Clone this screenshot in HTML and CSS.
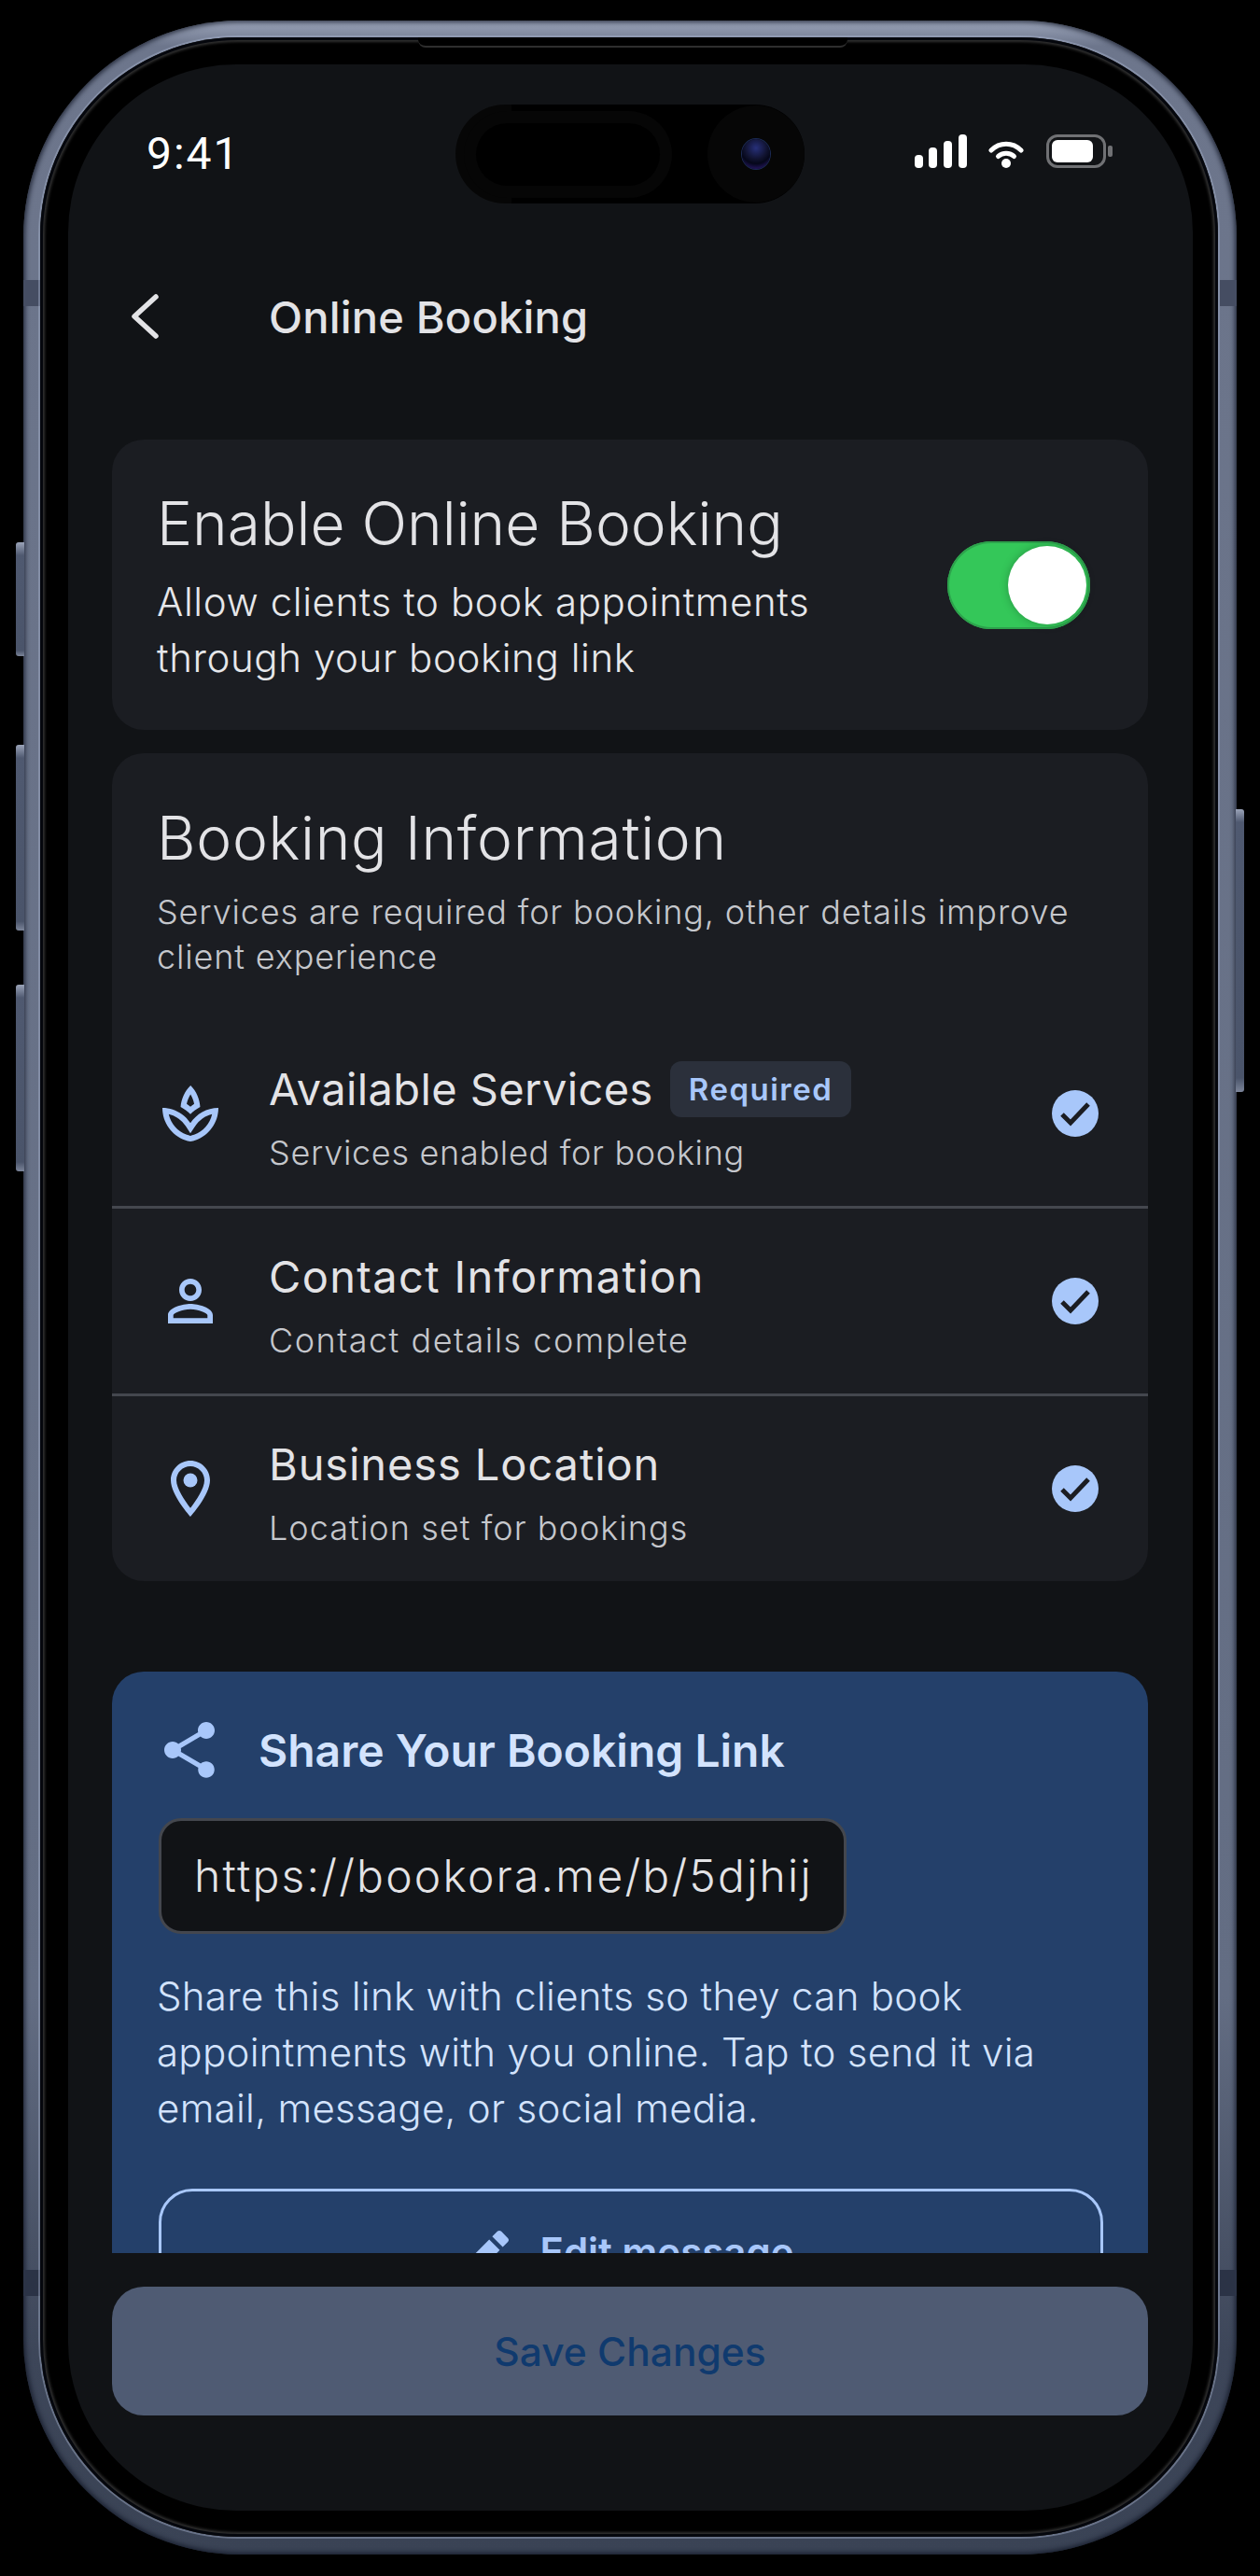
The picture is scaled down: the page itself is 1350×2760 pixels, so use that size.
FILE: index.html
```html
<!DOCTYPE html>
<html lang="en">
<head>
    <meta charset="UTF-8">
    <meta name="viewport" content="width=device-width, initial-scale=1.0">
    <title>Online Booking</title>
    <link rel="stylesheet" href="styles.css">
</head>
<body>

<div class="phone">
    <div class="side-btn side-btn-action"></div>
    <div class="side-btn side-btn-up"></div>
    <div class="side-btn side-btn-down"></div>
    <div class="side-btn side-btn-power"></div>
    <div class="antenna antenna-tl"></div>
    <div class="antenna antenna-tr"></div>
    <div class="antenna antenna-bl"></div>
    <div class="antenna antenna-br"></div>

    <div class="bezel">
        <div class="speaker-ear"></div>

        <div class="screen">
            <div class="island">
                <div class="island-pill"></div>
                <div class="island-cam"><div class="lens"></div></div>
            </div>

            <div class="statusbar">
                <span class="time">9:41</span>
                <div class="status-icons">
                    <svg class="ic-signal" viewBox="0 0 56 36">
                        <rect x="0" y="22" width="9" height="14" rx="4"/>
                        <rect x="15" y="14" width="9" height="22" rx="4"/>
                        <rect x="31" y="7" width="9" height="29" rx="4"/>
                        <rect x="47" y="0" width="9" height="36" rx="4"/>
                    </svg>
                    <svg class="ic-wifi" viewBox="0 0 38 30">
                        <path d="M3 11 C12 2 26 2 35 11" fill="none" stroke="#fff" stroke-width="5" stroke-linecap="round"/>
                        <path d="M10.500 17.500 C15 13 23 13 27.500 17.500" fill="none" stroke="#fff" stroke-width="5" stroke-linecap="round"/>
                        <circle cx="19" cy="25" r="5"/>
                    </svg>
                    <div class="battery">
                        <div class="battery-level"></div>
                    </div>
                    <div class="battery-nub"></div>
                </div>
            </div>

            <div class="appbar">
                <svg class="back" viewBox="0 0 72 72">
                    <polyline points="47,15 24,36 47,57" fill="none" stroke="#e3e3e6" stroke-width="5.500" stroke-linecap="round" stroke-linejoin="round"/>
                </svg>
                <h1>Online Booking</h1>
            </div>

            <div class="scroll">
                <section class="card card-enable">
                    <div class="enable-text">
                        <h2>Enable Online Booking</h2>
                        <p>Allow clients to book appointments through your booking link</p>
                    </div>
                    <div class="toggle"><div class="knob"></div></div>
                </section>

                <section class="card card-info">
                    <div class="info-head">
                        <h2>Booking Information</h2>
                        <p>Services are required for booking, other details improve client experience</p>
                    </div>

                    <div class="row">
                        <svg class="row-icon" viewBox="0 0 24 24"><path d="M15.49 9.630c-.18-2.790-1.310-5.510-3.430-7.630-2.140 2.140-3.320 4.860-3.550 7.630 1.280.68 2.460 1.560 3.490 2.630 1.030-1.060 2.210-1.940 3.490-2.630zm-3.440-4.440c.63 1.030 1.070 2.180 1.300 3.380-.47.3-.91.63-1.340.98-.42-.34-.87-.67-1.330-.97.25-1.200.71-2.350 1.370-3.390zM12 15.450c-.82-1.250-1.860-2.340-3.060-3.200-.13-.09-.27-.16-.4-.26.13.09.27.17.39.25C6.980 10.830 4.590 10 2 10c0 5.320 3.360 9.820 8.030 11.490.63.23 1.290.4 1.970.51.68-.12 1.330-.29 1.970-.51C18.640 19.820 22 15.320 22 10c-4.180 0-7.850 2.170-10 5.450zm1.320 4.150c-.44.15-.88.27-1.330.37-.44-.09-.87-.21-1.280-.36-3.290-1.180-5.700-3.990-6.450-7.350 1.100.26 2.150.71 3.120 1.330l-.02.01c.13.09.26.18.39.25l.07.04c.99.72 1.840 1.610 2.510 2.650L12 19.100l1.670-2.550c.69-1.050 1.550-1.950 2.530-2.660l.07-.05c.09-.05.18-.11.27-.17l-.01-.02c.98-.65 2.070-1.130 3.210-1.400-.75 3.370-3.150 6.180-6.420 7.350z"/></svg>
                        <div class="row-text">
                            <div class="row-title">Available Services <span class="badge">Required</span></div>
                            <div class="row-sub">Services enabled for booking</div>
                        </div>
                        <svg class="check" viewBox="0 0 50 50"><circle cx="25" cy="25" r="25"/><polyline points="11,26 20,35 39,15"/></svg>
                    </div>

                    <div class="row row-contact">
                        <svg class="row-icon" viewBox="0 0 24 24"><path d="M12 5.900c1.160 0 2.100.94 2.100 2.100s-.94 2.100-2.100 2.100S9.900 9.160 9.900 8s.94-2.100 2.100-2.100m0 9c2.970 0 6.100 1.460 6.100 2.100v1.100H5.900V17c0-.64 3.130-2.100 6.100-2.100M12 4C9.790 4 8 5.790 8 8s1.790 4 4 4 4-1.790 4-4-1.790-4-4-4zm0 9c-2.670 0-8 1.340-8 4v3h16v-3c0-2.660-5.330-4-8-4z"/></svg>
                        <div class="row-text">
                            <div class="row-title">Contact Information</div>
                            <div class="row-sub">Contact details complete</div>
                        </div>
                        <svg class="check" viewBox="0 0 50 50"><circle cx="25" cy="25" r="25"/><polyline points="11,26 20,35 39,15"/></svg>
                    </div>

                    <div class="row row-location">
                        <svg class="row-icon" viewBox="0 0 24 24"><path d="M12 2C8.130 2 5 5.130 5 9c0 5.250 7 13 7 13s7-7.750 7-13c0-3.870-3.130-7-7-7zM7 9c0-2.760 2.240-5 5-5s5 2.240 5 5c0 2.880-2.880 7.190-5 9.880C9.920 16.210 7 11.850 7 9z"/><circle cx="12" cy="9" r="2.500"/></svg>
                        <div class="row-text">
                            <div class="row-title">Business Location</div>
                            <div class="row-sub">Location set for bookings</div>
                        </div>
                        <svg class="check" viewBox="0 0 50 50"><circle cx="25" cy="25" r="25"/><polyline points="11,26 20,35 39,15"/></svg>
                    </div>
                </section>

                <section class="card card-share">
                    <div class="share-head">
                        <svg class="share-icon" viewBox="0 0 24 24"><path d="M18 16.080c-.76 0-1.440.3-1.960.77L8.910 12.700c.05-.23.09-.46.09-.7s-.04-.47-.09-.7l7.050-4.110c.54.5 1.250.81 2.040.81 1.660 0 3-1.340 3-3s-1.340-3-3-3-3 1.340-3 3c0 .24.04.47.09.7L8.040 9.810C7.500 9.310 6.790 9 6 9c-1.660 0-3 1.340-3 3s1.340 3 3 3c.79 0 1.500-.31 2.040-.81l7.120 4.160c-.05.21-.08.43-.08.65 0 1.610 1.310 2.920 2.920 2.920s2.920-1.310 2.920-2.920-1.310-2.920-2.920-2.920z"/></svg>
                        <h3>Share Your Booking Link</h3>
                    </div>
                    <div class="url-box">https://bookora.me/b/5djhij</div>
                    <p class="share-text">Share this link with clients so they can book appointments with you online. Tap to send it via email, message, or social media.</p>
                    <button class="edit-btn">
                        <svg class="edit-icon" viewBox="0 0 24 24"><path d="M3 17.250V21h3.750L17.810 9.940l-3.750-3.750L3 17.250zM20.710 7.040c.39-.39.39-1.020 0-1.410l-2.340-2.340c-.39-.39-1.020-.39-1.410 0l-1.830 1.830 3.750 3.750 1.830-1.830z"/></svg>
                        <span class="edit-label">Edit message</span>
                    </button>
                </section>
            </div>

            <div class="footer">
                <button class="save-btn">Save Changes</button>
            </div>
        </div>
    </div>
</div>

</body>
</html>
```

FILE: styles.css
```css
* {
    box-sizing: border-box;
}
body {
    margin: 0;
    background-color: #000;
    font-family: Inter, "Noto Sans", sans-serif;
}
h1, h2, h3, p {
    margin: 0;
}
button {
    font-family: inherit;
}

/* phone frame */
.phone {
    position: relative;
    width: 1300px;
    height: 2715px;
    margin: 22px 0 0 25px;
    padding: 18px 20px 19px 18px;
    border-radius: 232px;
    background: linear-gradient(180deg, #9aa3b8 0, #6d768c 1%, #636d83 78%, #3d4659 92%, #3a4355 100%);
    box-shadow: inset 0 0 5px 2px rgba(15, 20, 35, 0.75);
}
.bezel {
    position: relative;
    height: 100%;
    padding: 29px 27px 28px 30px;
    border-radius: 212px;
    background-color: #000;
    box-shadow: 0 0 0 2px rgba(170, 180, 208, 0.42), inset 0 0 0 3px #05070d, inset 0 0 3px 5px rgba(90, 90, 90, 0.55);
}
.speaker-ear {
    position: absolute;
    top: 0;
    left: 405px;
    width: 460px;
    height: 11px;
    border-bottom: 2px solid #2e2e2e;
    border-radius: 0 0 8px 8px;
    background-color: #000;
}
.side-btn {
    position: absolute;
    left: -8px;
    width: 9px;
    border-radius: 3px 0 0 3px;
    background: linear-gradient(180deg, #9aa3b8 0, #4f5970 14px, #4a546a 95%, #7c859a 100%);
}
.side-btn-action {
    top: 559px;
    height: 122px;
}
.side-btn-up {
    top: 776px;
    height: 199px;
}
.side-btn-down {
    top: 1033px;
    height: 200px;
}
.side-btn-power {
    left: auto;
    right: -8px;
    top: 845px;
    height: 303px;
    border-radius: 0 3px 3px 0;
}
.antenna {
    position: absolute;
    width: 18px;
    height: 28px;
    background-color: #454d62;
}
.antenna-tl {
    top: 278px;
    left: 0;
}
.antenna-tr {
    top: 278px;
    right: 0;
}
.antenna-bl {
    top: 2410px;
    left: 0;
    background-color: #2b3346;
}
.antenna-br {
    top: 2410px;
    right: 0;
    background-color: #2b3346;
}

.screen {
    position: relative;
    display: flex;
    flex-direction: column;
    height: 100%;
    overflow: hidden;
    border-radius: 180px;
    background-color: #111316;
    color: #e3e3e6;
}

/* dynamic island */
.island {
    position: absolute;
    top: 43px;
    left: 415px;
    display: flex;
    align-items: center;
    justify-content: space-between;
    width: 374px;
    height: 106px;
    padding: 0 0 0 22px;
    border-radius: 53px;
    background: linear-gradient(90deg, #060606 0, #060606 60px, #000 60px);
}
.island-pill {
    width: 197px;
    height: 67px;
    border-radius: 34px;
    background-color: #000;
    box-shadow: 0 0 0 13px #060606;
}
.island-cam {
    display: flex;
    align-items: center;
    justify-content: center;
    width: 104px;
    height: 104px;
    border-radius: 50%;
    background-color: #060606;
}
.lens {
    width: 30px;
    height: 32px;
    border-radius: 50%;
    background: radial-gradient(circle at 50% 30%, #27307a 0, #10122e 45%, #05071a 62%, #3a1f8c 100%);
    box-shadow: 0 0 0 1px #1b2a55;
}

/* status bar */
.statusbar {
    display: flex;
    align-items: flex-start;
    justify-content: space-between;
    height: 234px;
    padding: 72px 86px 0 84px;
}
.time {
    font-family: Roboto, sans-serif;
    font-size: 48px;
    font-weight: 400;
    line-height: 48px;
    letter-spacing: 2px;
    color: #fff;
}
.status-icons {
    display: flex;
    align-items: center;
    height: 36px;
    margin-top: 3px;
    fill: #fff;
}
.ic-signal {
    width: 56px;
    height: 36px;
    margin-right: 23px;
}
.ic-wifi {
    width: 38px;
    height: 30px;
    margin: 6px 24px 0 0;
}
.battery {
    width: 64px;
    height: 36px;
    padding: 3px;
    border: 3px solid #707174;
    border-radius: 12px;
}
.battery-level {
    width: 44px;
    height: 100%;
    border-radius: 6px;
    background-color: #fff;
}
.battery-nub {
    width: 5px;
    height: 12px;
    margin-left: 2px;
    border-radius: 2px;
    background-color: #707174;
}

/* app bar */
.appbar {
    display: flex;
    align-items: center;
    height: 72px;
    padding-left: 47px;
}
.back {
    width: 72px;
    height: 72px;
    margin-right: 96px;
}
.appbar h1 {
    font-size: 47px;
    font-weight: 450;
    letter-spacing: 0.200px;
}

.scroll {
    flex: 1;
    min-height: 0;
    margin-top: 96px;
    padding: 0 48px 0 47px;
    overflow: hidden;
}
.card {
    border-radius: 34px;
    background-color: #1b1d22;
}

/* enable card */
.card-enable {
    display: flex;
    align-items: center;
    justify-content: space-between;
    padding: 48px 62px 47px 48px;
}
.enable-text {
    width: 760px;
}
.card h2 {
    font-size: 64px;
    font-weight: 300;
    line-height: 84px;
}
.enable-text p {
    margin-top: 12px;
    font-size: 42px;
    font-weight: 300;
    line-height: 60px;
    letter-spacing: 0.600px;
    color: #e6e7ea;
}
.toggle {
    display: flex;
    align-items: center;
    justify-content: flex-end;
    width: 153px;
    height: 94px;
    padding-right: 4px;
    border-radius: 47px;
    background-color: #34c759;
    box-shadow: inset 0 0 0 2px #2da24c;
}
.knob {
    width: 84px;
    height: 84px;
    border-radius: 50%;
    background-color: #fff;
    box-shadow: 0 0 10px rgba(0, 0, 0, 0.25);
}

/* booking information */
.card-info {
    margin-top: 25px;
    padding-top: 49px;
}
.info-head {
    padding: 0 48px 45px;
}
.info-head h2 {
    letter-spacing: 0.700px;
}
.info-head p {
    margin-top: 13px;
    font-size: 36px;
    font-weight: 300;
    line-height: 48px;
    letter-spacing: 0.860px;
    color: #c5c7cc;
}
.row {
    display: flex;
    align-items: center;
    height: 198px;
    padding: 0 53px 0 48px;
}
.row + .row {
    box-sizing: content-box;
    border-top: 3px solid #44474e;
}
.row-icon {
    flex: none;
    width: 72px;
    height: 72px;
    margin-right: 48px;
    fill: #a8c7fa;
}
.row-text {
    flex: 1;
    margin-top: 9px;
}
.row-title {
    display: flex;
    align-items: center;
    gap: 18px;
    font-size: 47px;
    font-weight: 400;
    line-height: 60px;
    letter-spacing: 0.400px;
    color: #e3e3e6;
}
.row-sub {
    margin-top: 14px;
    font-size: 36px;
    font-weight: 300;
    line-height: 48px;
    letter-spacing: 0.700px;
    color: #c5c7cc;
}
.row-contact .row-title {
    letter-spacing: 1.350px;
}
.row-contact .row-sub {
    letter-spacing: 1.500px;
}
.row-location .row-title {
    letter-spacing: 0.900px;
}
.row-location .row-sub {
    letter-spacing: 1.050px;
}
.badge {
    height: 60px;
    padding: 0 20px;
    border-radius: 12px;
    background-color: #2b303b;
    font-size: 33px;
    font-weight: 600;
    line-height: 60px;
    letter-spacing: 1.500px;
    color: #a8c7fa;
}
.check {
    flex: none;
    width: 50px;
    height: 50px;
}
.check circle {
    fill: #a8c7fa;
}
.check polyline {
    fill: none;
    stroke: #1b1d22;
    stroke-width: 5;
}

/* share card */
.card-share {
    margin-top: 97px;
    padding: 48px 48px 60px 50px;
    border-radius: 34px;
    background-color: #24406a;
}
.share-head {
    display: flex;
    align-items: center;
    gap: 38px;
    margin-left: -3px;
}
.share-icon {
    width: 72px;
    height: 72px;
    fill: #a8c7fa;
}
.share-head h3 {
    font-size: 48px;
    font-weight: 600;
    color: #d3e3fd;
}
.url-box {
    width: 737px;
    height: 124px;
    margin-top: 37px;
    padding-left: 35px;
    border: 3px solid #44474e;
    border-radius: 24px;
    background-color: #111316;
    font-size: 48px;
    font-weight: 300;
    line-height: 118px;
    letter-spacing: 2.200px;
    color: #e3e3e6;
    white-space: nowrap;
}
.share-text {
    margin: 37px 0 0 -2px;
    font-size: 42px;
    font-weight: 300;
    line-height: 60px;
    letter-spacing: 0.300px;
    color: #d3e3fd;
}
.edit-btn {
    display: flex;
    align-items: center;
    justify-content: center;
    gap: 24px;
    width: 100%;
    height: 144px;
    margin-top: 56px;
    padding: 0 19px 0 0;
    border: 3px solid #a8c7fa;
    border-radius: 36px;
    background: none;
    font-size: 42px;
    font-weight: 600;
    color: #a8c7fa;
}
.edit-label {
    margin-bottom: 10px;
}
.edit-icon {
    width: 72px;
    height: 72px;
    fill: #a8c7fa;
}

/* footer */
.footer {
    flex: none;
    height: 276px;
    padding: 36px 48px 0 47px;
}
.save-btn {
    display: block;
    width: 100%;
    height: 138px;
    border: none;
    border-radius: 34px;
    background-color: #4f5b73;
    font-size: 42.500px;
    font-weight: 500;
    color: #103a6e;
}
```
